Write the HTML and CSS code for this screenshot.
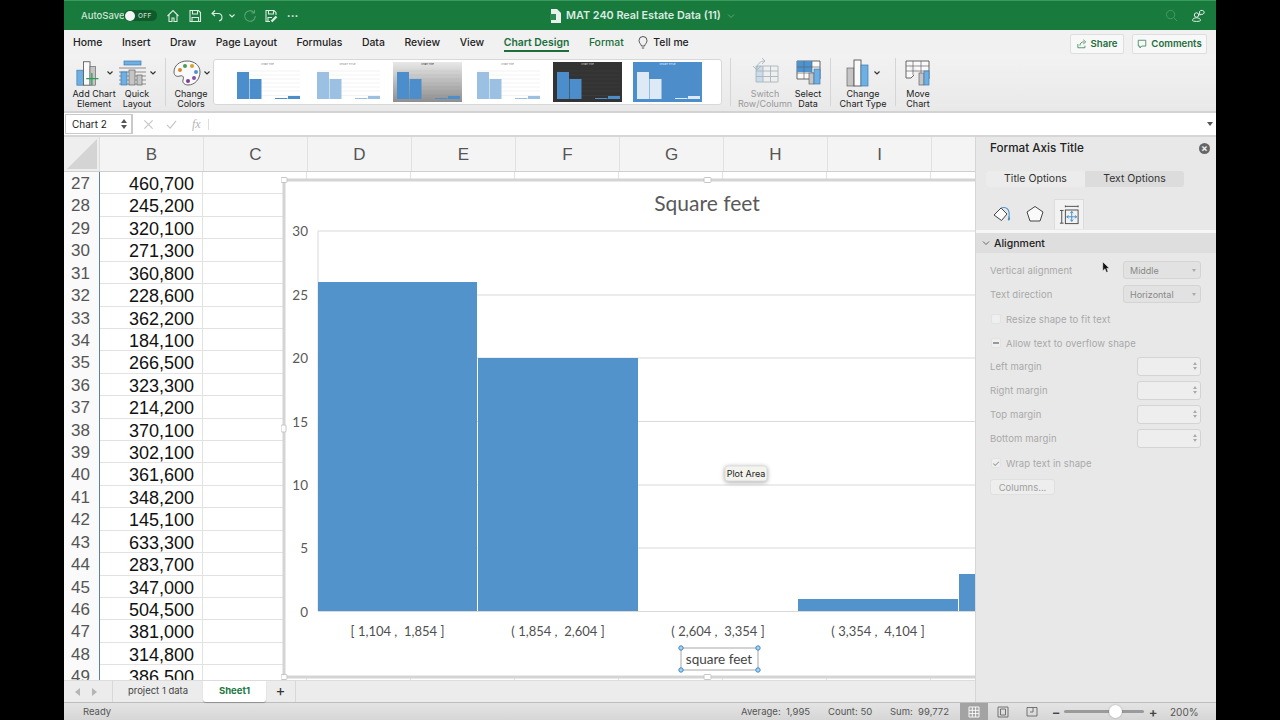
FILE: index.html
```html
<!DOCTYPE html>
<html lang="en">
<head>
<meta charset="utf-8">
<title>MAT 240 Real Estate Data (11)</title>
<link rel="stylesheet" href="styles.css">
</head>
<body>
<svg class="defs" width="0" height="0">
  <defs>
    <symbol id="thumb" viewBox="0 0 69 34" preserveAspectRatio="none">
      <path class="tgrid" d="M4 3H67M4 7H67M4 11H67M4 15H67M4 19H67M4 23H67M4 27.500H67"/>
      <rect x="4" y="4" width="12" height="27" fill="currentColor"/>
      <rect x="16.500" y="11" width="12" height="20" fill="currentColor"/>
      <rect x="42" y="30" width="12.500" height="1" fill="currentColor"/>
      <rect x="55" y="28" width="12" height="3" fill="currentColor"/>
    </symbol>
  </defs>
</svg>
<div class="app">
  <header class="titlebar">
    <div class="qat">
      <span class="autosave">AutoSave</span>
      <span class="toggle"><i class="knob"></i><b>OFF</b></span>
      <svg class="qi home" viewBox="0 0 14 14"><path d="M1.500 7 7 1.500 12.500 7M3 6v6.500h3V9h2v3.500h3V6"/></svg>
      <svg class="qi save" viewBox="0 0 14 14"><path d="M2 1.500h8.500L12.500 3.500V12.500H2ZM4.500 1.500V5H9.500V1.500M4 12.500V8.500H10.500V12.500"/></svg>
      <svg class="qi undo" viewBox="0 0 14 14"><path d="M5 1.500 2 4.500 5 7M2 4.500h6a3.800 3.800 0 0 1 1 7.500"/></svg>
      <svg class="qc" viewBox="0 0 8 8"><path d="M1.500 2.500 4 5l2.500-2.500"/></svg>
      <svg class="qi redo" viewBox="0 0 14 14"><path d="M11 3.500A5.300 5.300 0 1 0 12.300 7M11.500 1v3h-3"/></svg>
      <svg class="qi saveas" viewBox="0 0 14 14"><path d="M6 12.500H2V1.500h8L12 3.500V6M4.500 1.500V5h5V1.500M4 12V8.500h4"/><path class="thick" d="m7.500 12.500 5-5"/></svg>
      <span class="dots">&#8226;&#8226;&#8226;</span>
    </div>
    <div class="doc">
      <svg class="docicon" viewBox="0 0 11 14"><path d="M1 0h6l4 4v10H1Z"/><rect x="0" y="5" width="6" height="6" fill="#2b8a50"/></svg>
      <span>MAT 240 Real Estate Data (11)</span>
      <svg class="docchev" viewBox="0 0 8 8"><path d="M1 2.500 4 5.500 7 2.500"/></svg>
    </div>
    <div class="tright">
      <svg class="search" viewBox="0 0 14 14"><circle cx="6" cy="6" r="4.500"/><path d="m9.500 9.500 3.500 3.500"/></svg>
      <svg class="people" viewBox="0 0 16 14"><circle cx="5.500" cy="6" r="2.200"/><path d="M1.500 11.500c0-2 2-2.700 4-2.700s4 .7 4 2.700c0 1.200-8 1.200-8 0ZM8.500 2.500a2.500 2 0 1 1 1.500 2.800L8.800 6.200Z"/></svg>
    </div>
  </header>

  <nav class="tabs">
    <a>Home</a><a>Insert</a><a>Draw</a><a>Page Layout</a><a>Formulas</a><a>Data</a><a>Review</a><a>View</a>
    <a class="green active">Chart Design</a><a class="green">Format</a>
    <a class="tell"><svg viewBox="0 0 10 14"><path d="M3.500 10C3 8 1 7 1 4.500a4 4 0 0 1 8 0C9 7 7 8 6.500 10ZM3.800 12h2.400"/></svg>Tell me</a>
    <div class="actions">
      <button class="action a-share"><svg viewBox="0 0 12 12"><path d="M1 6v4.500h8.500V8M3.500 8c0-3 2-4.500 5-4.500M7.500 1 10.500 3.500 7.500 6"/></svg>Share</button>
      <button class="action a-comments"><svg viewBox="0 0 12 12"><path d="M1.500 1.500h9v7H5.500L3.500 10.800V8.500h-2Z"/></svg>Comments</button>
    </div>
  </nav>

  <section class="ribbon">
    <div class="rb w-add">
      <div class="ricon">
        <svg class="big" viewBox="0 0 32 30"><rect x="2" y="12" width="7" height="16" class="blue"/><rect x="9" y="3" width="7" height="25" class="ln"/><rect x="16" y="8" width="6" height="20" class="gray"/><path d="M18 15v13M12 21h13" class="plus"/></svg>
        <svg class="chev" viewBox="0 0 8 8"><path d="M1.500 2.500 4 5l2.500-2.500"/></svg>
      </div>
      <span>Add Chart<br>Element</span>
    </div>
    <div class="rb w-quick">
      <div class="ricon">
        <svg class="big" viewBox="0 0 30 30"><rect x="6" y="3" width="17" height="4" class="blue"/><path class="hl" d="M1 10h27M1 14h27M1 18h27M1 22h27M1 26h27"/><rect x="3" y="14" width="6" height="13" class="blue" /><rect x="11" y="12" width="6" height="15" class="gray"/><rect x="19" y="17" width="5" height="10" class="gray"/></svg>
        <svg class="chev" viewBox="0 0 8 8"><path d="M1.500 2.500 4 5l2.500-2.500"/></svg>
      </div>
      <span>Quick<br>Layout</span>
    </div>
    <i class="sep s1"></i>
    <div class="rb w-colors">
      <div class="ricon">
        <svg class="big" viewBox="0 0 30 30"><path class="ln" d="M15 3C7 3 2 8 2 14c0 4 3 5 6 4 3-1 4 1 3 4-1 3 2 5 5 5 7 0 12-6 12-13C28 7 22 3 15 3Z"/><circle cx="8" cy="12" r="2" fill="#d9882c"/><circle cx="13" cy="8" r="2" fill="#4a9c54"/><circle cx="20" cy="8" r="2" fill="#d9a02c"/><circle cx="24" cy="14" r="2" fill="#4f93cf"/><circle cx="22" cy="20" r="2" fill="#8154a6"/><circle cx="16" cy="23" r="2" fill="#7b3d96"/></svg>
        <svg class="chev" viewBox="0 0 8 8"><path d="M1.500 2.500 4 5l2.500-2.500"/></svg>
      </div>
      <span>Change<br>Colors</span>
    </div>
    <div class="gallery">
      <div class="th th1"><em>Chart Title</em><svg><use href="#thumb"/></svg></div>
      <div class="th th2"><em>CHART TITLE</em><svg><use href="#thumb"/></svg></div>
      <div class="th th3"><em>Chart Title</em><svg><use href="#thumb"/></svg></div>
      <div class="th th4"><em>Chart Title</em><svg><use href="#thumb"/></svg></div>
      <div class="th th5"><em>Chart Title</em><svg><use href="#thumb"/></svg></div>
      <div class="th th6"><em>CHART TITLE</em><svg><use href="#thumb"/></svg></div>
    </div>
    <i class="sep s2"></i>
    <div class="rb w-switch dim">
      <div class="ricon">
        <svg class="big" viewBox="0 0 28 30"><rect x="5" y="8" width="7" height="16" fill="#c8dcec"/><path class="faint" d="M5 8h22v16H5ZM5 13h22M5 18.500h22M12 8v16M19.500 8v16"/><path class="faint" d="M2 8 6 12 10 8M6 11c0-5 3-8 8-8M11 0l3 3-3 3"/></svg>
      </div>
      <span>Switch<br>Row/Column</span>
    </div>
    <div class="rb w-select">
      <div class="ricon">
        <svg class="big" viewBox="0 0 28 30"><path class="ln" d="M3 3h23v18H3Z"/><rect x="3" y="3" width="15" height="11" fill="#4a94d3"/><path class="hl" d="M3 9h23M3 15h23M10 3v18M18 3v18"/><rect x="15" y="15" width="5" height="11" class="gray"/><rect x="20" y="11" width="6" height="15" class="blue"/></svg>
      </div>
      <span>Select<br>Data</span>
    </div>
    <i class="sep s3"></i>
    <div class="rb w-type">
      <div class="ricon">
        <svg class="big" viewBox="0 0 26 30"><rect x="1" y="10" width="7" height="18" class="gray"/><rect x="8" y="2" width="7" height="26" class="ln"/><rect x="15" y="7" width="7" height="21" class="blue"/></svg>
        <svg class="chev" viewBox="0 0 8 8"><path d="M1.500 2.500 4 5l2.500-2.500"/></svg>
      </div>
      <span>Change<br>Chart Type</span>
    </div>
    <i class="sep s4"></i>
    <div class="rb w-move">
      <div class="ricon">
        <svg class="big" viewBox="0 0 26 30"><path class="ln" d="M1 3h23v18M1 3v17h5l3-3"/><path class="hl" d="M1 8h23M1 13h23M8 3v14M16 3v14"/><rect x="14" y="15" width="5" height="12" class="gray"/><rect x="19" y="13" width="5" height="14" class="blue"/></svg>
      </div>
      <span>Move<br>Chart</span>
    </div>
  </section>

  <section class="formula">
    <div class="namebox"><span>Chart 2</span><b class="stepper"><i class="up"></i><i class="down"></i></b></div>
    <svg class="fx-i fx-x" viewBox="0 0 12 12"><path d="m1.500 1.500 9 9M10.500 1.500l-9 9"/></svg>
    <svg class="fx-i" viewBox="0 0 12 12"><path d="m1 6.500 3.500 3.500L11 2"/></svg>
    <span class="fx">fx</span>
    <i class="fx-sep"></i>
    <i class="fx-drop"></i>
  </section>

  <main class="main">
    <div class="sheet">
      <div class="colhead">
        <div class="corner"><i></i></div>
        <div class="col">B</div><div class="col">C</div><div class="col">D</div><div class="col">E</div><div class="col">F</div><div class="col">G</div><div class="col">H</div><div class="col">I</div><div class="col"></div>
      </div>
      <div class="grid">
        <div class="row"><b>27</b><span>460,700</span><u></u></div>
        <div class="row"><b>28</b><span>245,200</span><u></u></div>
        <div class="row"><b>29</b><span>320,100</span><u></u></div>
        <div class="row"><b>30</b><span>271,300</span><u></u></div>
        <div class="row"><b>31</b><span>360,800</span><u></u></div>
        <div class="row"><b>32</b><span>228,600</span><u></u></div>
        <div class="row"><b>33</b><span>362,200</span><u></u></div>
        <div class="row"><b>34</b><span>184,100</span><u></u></div>
        <div class="row"><b>35</b><span>266,500</span><u></u></div>
        <div class="row"><b>36</b><span>323,300</span><u></u></div>
        <div class="row"><b>37</b><span>214,200</span><u></u></div>
        <div class="row"><b>38</b><span>370,100</span><u></u></div>
        <div class="row"><b>39</b><span>302,100</span><u></u></div>
        <div class="row"><b>40</b><span>361,600</span><u></u></div>
        <div class="row"><b>41</b><span>348,200</span><u></u></div>
        <div class="row"><b>42</b><span>145,100</span><u></u></div>
        <div class="row"><b>43</b><span>633,300</span><u></u></div>
        <div class="row"><b>44</b><span>283,700</span><u></u></div>
        <div class="row"><b>45</b><span>347,000</span><u></u></div>
        <div class="row"><b>46</b><span>504,500</span><u></u></div>
        <div class="row"><b>47</b><span>381,000</span><u></u></div>
        <div class="row"><b>48</b><span>314,800</span><u></u></div>
        <div class="row"><b>49</b><span>386,500</span><u></u></div>
        <svg class="chart" viewBox="281 175 695 508">
          <rect class="c-frame" x="284" y="180" width="720" height="497"/>
          <text class="c-title" x="707" y="211">Square feet</text>
          <path class="c-grid" d="M318 231H976M318 295H976M318 358H976M318 421.500H976M318 485H976M318 548H976M318 231V611M318 611.500H976"/>
          <rect class="c-bar" x="318" y="282" width="159" height="329"/>
          <rect class="c-bar" x="478" y="358" width="160" height="253"/>
          <rect class="c-bar" x="798" y="599" width="160" height="12"/>
          <rect class="c-bar" x="959" y="574" width="17" height="37"/>
          <text class="c-y" x="308" y="236">30</text>
          <text class="c-y" x="308" y="300">25</text>
          <text class="c-y" x="308" y="363">20</text>
          <text class="c-y" x="308" y="427">15</text>
          <text class="c-y" x="308" y="490">10</text>
          <text class="c-y" x="308" y="553">5</text>
          <text class="c-y" x="308" y="617">0</text>
          <text class="c-x" x="397.500" y="636">[ 1,104 ,  1,854 ]</text>
          <text class="c-x" x="558" y="636">( 1,854 ,  2,604 ]</text>
          <text class="c-x" x="718" y="636">( 2,604 ,  3,354 ]</text>
          <text class="c-x" x="878" y="636">( 3,354 ,  4,104 ]</text>
          <rect class="c-sel" x="681" y="648" width="77" height="22"/>
          <text class="c-at" x="719" y="664">square feet</text>
          <circle class="c-h" cx="681" cy="648" r="2.200"/><circle class="c-h" cx="758" cy="648" r="2.200"/>
          <circle class="c-h" cx="681" cy="670" r="2.200"/><circle class="c-h" cx="758" cy="670" r="2.200"/>
          <rect class="c-ch" x="281" y="177.500" width="6" height="5" rx="1"/>
          <rect class="c-ch" x="704" y="177.500" width="7" height="5" rx="1"/>
          <rect class="c-ch" x="281" y="425" width="5" height="7" rx="1"/>
          <rect class="c-ch" x="281" y="674.500" width="6" height="5" rx="1"/>
          <rect class="c-ch" x="704" y="674.500" width="7" height="5" rx="1"/>
          <rect class="c-tipbox" x="725" y="466" width="42" height="15" rx="3"/>
          <text class="c-tip" x="746" y="477">Plot Area</text>
        </svg>
      </div>
      <div class="sheettabs">
        <div class="nav"><i class="tl"></i><i class="tr"></i></div>
        <span class="st">project 1 data</span>
        <span class="st on">Sheet1</span>
        <span class="add">+</span>
      </div>
    </div>

    <aside class="panel">
      <div class="phead"><strong>Format Axis Title</strong><span class="close">&#215;</span></div>
      <div class="seg"><span class="lit">Title Options</span><span>Text Options</span></div>
      <div class="ptabs">
        <span class="pt"><svg viewBox="0 0 20 20"><path class="pw" d="M2 11 9 4l6 6-5.500 6.500Z"/><path class="pb" d="M9 4c6-2 9 2 8 9"/><path class="pbf" d="M17 12c1.500 2 1.500 4 0 4.500s-1.500-2.500 0-4.500Z"/></svg></span>
        <span class="pt"><svg viewBox="0 0 20 20"><path class="pw" d="M10 2.500 18 8l-3 9H5L2 8Z"/></svg></span>
        <span class="pt on"><svg viewBox="0 0 22 22"><path class="pi" d="M1 6h4M1 20h4M3 6v14M7 1.500h14M7 .5v2M21 .5v2"/><rect x="7" y="5.500" width="14" height="15" class="pi"/><path class="pb" d="M14 7v11M8.500 13h11M12.500 9l1.500-2 1.500 2M12.500 16l1.500 2 1.500-2M10.500 11.500l-2 1.500 2 1.500M17.500 11.500l2 1.500-2 1.500"/></svg></span>
      </div>
      <div class="sect"><svg viewBox="0 0 8 8"><path d="M1 2.500 4 5.500 7 2.500"/></svg>Alignment</div>
      <div class="pbody">
        <div class="prow sel"><label>Vertical alignment</label><div class="dd"><span>Middle</span><i></i></div></div>
        <div class="prow sel"><label>Text direction</label><div class="dd"><span>Horizontal</span><i></i></div></div>
        <div class="prow chk nudge"><i class="box"></i><label>Resize shape to fit text</label></div>
        <div class="prow chk"><i class="box dash"></i><label>Allow text to overflow shape</label></div>
        <div class="prow unnudge"><label>Left margin</label><div class="spin"><b class="stepper"><i class="up"></i><i class="down"></i></b></div></div>
        <div class="prow"><label>Right margin</label><div class="spin"><b class="stepper"><i class="up"></i><i class="down"></i></b></div></div>
        <div class="prow"><label>Top margin</label><div class="spin"><b class="stepper"><i class="up"></i><i class="down"></i></b></div></div>
        <div class="prow"><label>Bottom margin</label><div class="spin"><b class="stepper"><i class="up"></i><i class="down"></i></b></div></div>
        <div class="prow chk wrap"><i class="box check">&#10003;</i><label>Wrap text in shape</label></div>
        <button class="cols">Columns...</button>
      </div>
      <svg class="cursor" viewBox="0 0 10 14"><path d="M1 0v11l2.800-2.500L5.500 13l2-.8L5.800 8H9Z"/></svg>
    </aside>
  </main>

  <footer class="status">
    <span class="ready">Ready</span>
    <span class="stat s-a">Average:&nbsp; 1,995</span>
    <span class="stat s-c">Count: 50</span>
    <span class="stat s-s">Sum:&nbsp; 99,772</span>
    <span class="vb on"><svg viewBox="0 0 12 12"><path d="M1 1h10v10H1ZM1 4.300h10M1 7.600h10M4.300 1v10M7.600 1v10"/></svg></span>
    <span class="vb"><svg viewBox="0 0 12 12"><path d="M1 1h10v10H1ZM3.500 3h5v6h-5Z"/></svg></span>
    <span class="vb"><svg viewBox="0 0 12 12"><path d="M1 1.500h10V10H1ZM7 1.500V6H4"/></svg></span>
    <span class="zm zm-a">&#8722;</span>
    <div class="slider"><i class="thumb"></i></div>
    <span class="zm zm-b">+</span>
    <span class="pct">200%</span>
  </footer>
</div>
</body>
</html>
```
FILE: styles.css
```css
* { box-sizing: border-box; }
html, body { margin: 0; height: 100%; background: #000; overflow: hidden; }
body { font-family: Inter, "Liberation Sans", sans-serif; color: #222; }
.defs { position: absolute; }
.app { width: 1152px; height: 720px; margin: 0 auto; display: flex; flex-direction: column; background: #f1f1f1; }

/* title bar */
.titlebar { height: 30px; flex: none; background: #187a3c; border-top: 1px solid #3a9a5c; display: grid; grid-template-columns: 1fr auto 1fr; align-items: center; color: #e6f0ea; }
.qat { display: flex; align-items: center; padding-left: 17px; height: 100%; }
.autosave { font-size: 9.500px; font-weight: 500; color: #cfe4d6; width: 43px; }
.toggle { width: 33px; height: 11px; background: #0e5a2a; border-radius: 6px; display: flex; align-items: center; position: relative; padding-left: 1px; }
.knob { width: 10px; height: 10px; border-radius: 50%; background: #f4f4f4; }
.toggle b { font-size: 6.500px; font-weight: 500; margin-left: 3px; color: #c9ddcf; letter-spacing: .3px; }
.qi { width: 14px; height: 14px; flex: none; fill: none; stroke: #dcebe1; stroke-width: 1.100; }
.home { margin-left: 9px; }
.save { margin-left: 8px; }
.undo { margin-left: 8px; }
.qc { width: 8px; height: 8px; margin-left: 4px; fill: none; stroke: #dcebe1; stroke-width: 1.200; }
.redo { margin-left: 7px; opacity: .35; }
.saveas { margin-left: 7px; }
.thick { stroke-width: 2.400; }
.dots { font-size: 6px; margin-left: 9px; letter-spacing: .5px; color: #e6f0ea; }
.doc { display: flex; align-items: center; padding-left: 5px; font-size: 10.800px; font-weight: 600; color: #dcebe1; white-space: nowrap; }
.docicon { width: 11px; height: 14px; margin-right: 5px; fill: #e8f1eb; }
.docchev { width: 8px; height: 8px; margin-left: 6px; fill: none; stroke: #5da678; stroke-width: 1; }
.tright { display: flex; justify-content: flex-end; align-items: center; padding-right: 9px; gap: 13px; }
.search { width: 13px; height: 13px; fill: none; stroke: #4b9a68; stroke-width: 1; }
.people { width: 16px; height: 14px; fill: none; stroke: #e0eee5; stroke-width: 1; }

/* tabs */
.tabs { height: 25px; flex: none; display: flex; align-items: center; padding-left: 9px; gap: 19.600px; font-size: 10.400px; font-weight: 500; background: #f1f1f1; color: #222; position: relative; }
.tabs a { white-space: nowrap; line-height: 25px; height: 25px; position: relative; }
.green { color: #1c6e3b; }
.tabs .active { font-weight: 600; }
.tabs .active::after { content: ""; position: absolute; left: 0; right: 0; bottom: 3px; height: 2px; background: #1c6e3b; }
.tell { display: flex; align-items: center; gap: 5px; margin-left: -5px; }
.tell svg { width: 10px; height: 14px; fill: none; stroke: #444; stroke-width: .9; }
.actions { margin-left: auto; padding-right: 9px; display: flex; gap: 8px; margin-top: 2px; }
.action { height: 20px; padding: 0; border: 1px solid #dedede; border-radius: 2px; background: #f8f8f8; color: #1c6e3b; font: 600 9.600px Inter, sans-serif; display: flex; align-items: center; justify-content: center; gap: 4px; }
.a-share { width: 54px; }
.a-comments { width: 75px; }
.action svg { width: 10px; height: 10px; fill: none; stroke: #2a7a48; stroke-width: .9; }

/* ribbon */
.ribbon { height: 58px; flex: none; display: flex; align-items: flex-start; background: linear-gradient(#f2f2f2, #e9e9e9); border-bottom: 2px solid #d2d2d2; font-size: 9px; position: relative; }
.rb { display: flex; flex-direction: column; align-items: center; flex: none; padding-top: 3px; }
.rb span { text-align: center; line-height: 9.500px; font-size: 9px; white-space: nowrap; margin-top: 1px; }
.ricon { height: 30px; display: flex; align-items: center; justify-content: center; }
.big { width: 30px; height: 30px; flex: none; }
.big .blue { fill: #6fb0e3; stroke: #3c78ad; stroke-width: .7; }
.big .gray { fill: #c5c5c5; stroke: #666; stroke-width: .7; }
.big .ln { fill: #fafafa; stroke: #555; stroke-width: .9; }
.big .hl { fill: none; stroke: #666; stroke-width: .7; }
.big .plus { fill: none; stroke: #2a9a55; stroke-width: 1.300; }
.big .faint { fill: none; stroke: #a9b4bb; stroke-width: .9; }
.chev { width: 8px; height: 8px; margin-left: 1px; fill: none; stroke: #333; stroke-width: 1.200; }
.w-add { width: 46px; margin-left: 7px; }
.w-quick { width: 40px; }
.sep { flex: none; width: 1px; height: 48px; margin-top: 3px; background: #d5d5d5; }
.s1 { margin-left: 8px; }
.w-colors { width: 44px; margin-left: 3px; }
.gallery { flex: none; width: 509px; height: 46px; margin-top: 4px; margin-right: 8px; background: #fff; border: 1px solid #d8d8d8; border-radius: 3px; display: flex; padding: 2px 0 0 19px; gap: 11px; align-items: flex-start; }
.th { width: 69px; height: 40px; display: flex; flex-direction: column; color: #4c8ecb; background: #fff; flex: none; overflow: hidden; }
.th em { font-style: normal; font-size: 2.500px; text-align: center; line-height: 6px; height: 6px; color: #777; }
.th svg { width: 69px; height: 34px; display: block; }
.tgrid { fill: none; stroke: #888; stroke-width: .4; opacity: .25; }
.th2, .th4 { color: #9cc0e2; }
.th3 { background: linear-gradient(#e8e8e8, #8e8e8e); }
.th3 em { color: #222; }
.th5 { background: #333; color: #4c8ecb; }
.th5 em { color: #ddd; }
.th6 { background: #4c8ecb; color: #dde9f4; }
.th6 em { color: #fff; }
.w-switch { width: 52px; margin-left: 8px; }
.dim span { color: #999; }
.w-select { width: 34px; }
.s3 { margin-left: 5px; }
.w-type { width: 52px; margin-left: 6px; }
.w-type .big, .w-move .big { width: 26px; }
.s4 { margin-left: 6px; }
.w-move { width: 34px; margin-left: 5px; }

/* formula */
.formula { height: 24px; flex: none; background: #fff; border-bottom: 2px solid #d6d6d6; display: flex; align-items: center; padding-left: 1px; position: relative; }
.namebox { width: 68px; height: 20px; border: 1px solid #c9c9c9; border-width: 1px 2px 1px 1px; display: flex; align-items: center; padding: 0 4px 0 6px; font-size: 10px; background: #fff; justify-content: space-between; }
.stepper { display: flex; flex-direction: column; gap: 2px; }
.up, .down { display: block; width: 0; height: 0; border: 3px solid transparent; border-width: 0 3px 4px; border-bottom-color: #555; }
.down { border-width: 4px 3px 0; border-top-color: #555; border-bottom-color: transparent; }
.fx-i { width: 11px; height: 11px; margin-left: 12px; fill: none; stroke: #c4c4c4; stroke-width: 1.200; }
.fx-x { margin-left: 10px; }
.fx { font: italic 12px "Liberation Serif", serif; color: #b4b4b4; margin-left: 15px; }
.fx-sep { width: 1px; height: 11px; background: #ddd; margin-left: 7px; }
.fx-drop { margin-left: auto; margin-right: 3px; width: 0; height: 0; border: 3px solid transparent; border-top: 4px solid #555; border-bottom: 0; }

/* main */
.main { flex: 1; display: flex; min-height: 0; }
.sheet { width: 912px; flex: none; display: flex; flex-direction: column; min-height: 0; border-right: 1px solid #d6d6d6; }
.colhead { height: 35px; flex: none; display: flex; background: #f4f4f4; border-bottom: 1px solid #cfcfcf; }
.corner { width: 36px; flex: none; border-right: 1px solid #ddd; background: #eee; display: flex; align-items: flex-end; justify-content: flex-end; padding: 0 2px 2px 0; }
.corner i { display: block; width: 0; height: 0; border-style: solid; border-width: 0 0 30px 30px; border-color: transparent transparent #d4d4d4 transparent; }
.col { width: 104px; flex: none; text-align: center; font: 17px/36px "Liberation Sans", sans-serif; color: #555; border-right: 1px solid #e2e2e2; }
.grid { flex: 1; overflow: hidden; position: relative; background: #fff; }
.row { height: 22.430px; display: flex; align-items: center; font-family: "Liberation Sans", sans-serif; }
.row b { width: 36px; flex: none; height: 100%; font-weight: 400; font-size: 17px; line-height: 24px; color: #555; padding-left: 7px; background: #fafafa; border-right: 1px solid #5f7fa6; }
.row span { width: 103px; flex: none; height: 100%; text-align: right; font-size: 18px; line-height: 24px; color: #111; padding-right: 8px; border-right: 1px solid #e2e2e2; border-bottom: 1px solid #e2e2e2; }
.row u { flex: 1; height: 100%; border-bottom: 1px solid #e2e2e2; background: repeating-linear-gradient(90deg, transparent 0 103px, #e2e2e2 103px 104px); }
.chart { position: absolute; left: 217px; top: 3px; width: 695px; height: 508px; overflow: hidden; }
.c-frame { fill: #fff; stroke: #d4d4d4; stroke-width: 3; }
.c-title { font: 21px Lato, "Open Sans", sans-serif; fill: #595959; text-anchor: middle; }
.c-grid { fill: none; stroke: #d9d9d9; stroke-width: 1; }
.c-bar { fill: #5293cc; }
.c-y { font: 13.500px Lato, sans-serif; fill: #595959; text-anchor: end; }
.c-x { font: 13px Lato, sans-serif; fill: #4f4f4f; text-anchor: middle; white-space: pre; }
.c-sel { fill: #fff; stroke: #a8a8a8; stroke-width: 1; }
.c-at { font: 13.500px Lato, sans-serif; fill: #444; text-anchor: middle; }
.c-h { fill: #a9d0ee; stroke: #3f8ac7; stroke-width: 1; }
.c-ch { fill: #fff; stroke: #c6c6c6; stroke-width: 1; }
.c-tipbox { fill: #f4f4ee; stroke: #ddd; stroke-width: 1; filter: drop-shadow(0 1px 2px rgba(0,0,0,.35)); }
.c-tip { font: 9px Inter, sans-serif; fill: #222; text-anchor: middle; }

/* sheet tabs */
.sheettabs { height: 22px; flex: none; display: flex; align-items: stretch; background: #ececec; border-top: 1px solid #dcdcdc; font-size: 9.500px; position: relative; }
.nav { width: 49px; display: flex; align-items: center; gap: 12px; padding-left: 11px; border-right: 1px solid #d8d8d8; flex: none; }
.tl, .tr { width: 0; height: 0; border: 4px solid transparent; border-left-width: 0; border-right: 5px solid #b5b5b5; }
.tr { border-right: 0; border-left: 5px solid #b5b5b5; }
.st { width: 90px; flex: none; text-align: center; line-height: 20px; color: #444; }
.st.on { width: 63px; background: #fff; color: #1c7a42; font-weight: 700; border-radius: 0 0 3px 3px; box-shadow: 0 1px 1px rgba(0,0,0,.25); height: 21px; }
.add { width: 30px; flex: none; text-align: center; font-size: 15px; line-height: 19px; color: #333; border-right: 1px solid #d8d8d8; }

/* panel */
.panel { flex: 1; background: #e8e8e8; position: relative; display: flex; flex-direction: column; font-size: 9.500px; min-width: 0; }
.phead { height: 22px; flex: none; display: flex; align-items: center; justify-content: space-between; padding: 0 6px 0 14px; }
.phead strong { font-size: 11.700px; font-weight: 500; color: #222; }
.close { width: 11px; height: 11px; border-radius: 50%; background: #666; color: #eee; font-size: 10px; line-height: 11px; text-align: center; font-weight: 700; }
.seg { margin: 12px 32px 0 10px; height: 16px; display: flex; flex: none; background: #dcdcdc; border-radius: 3px; font-size: 10.500px; }
.seg span { flex: 1; text-align: center; line-height: 16px; color: #333; }
.seg .lit { background: #ececec; border-radius: 3px 0 0 3px; }
.ptabs { height: 30px; margin-top: 12px; display: flex; padding-left: 13px; gap: 7px; flex: none; }
.pt { width: 26px; height: 30px; display: flex; align-items: center; justify-content: center; }
.pt.on { background: #f2f2f2; border: 1px solid #dcdcdc; border-bottom: 0; width: 30px; margin-left: -1px; }
.pt svg { width: 20px; height: 20px; }
.pi { fill: none; stroke: #444; stroke-width: 1; }
.pw { fill: #fafafa; stroke: #444; stroke-width: 1; }
.pb { fill: none; stroke: #4a90cc; stroke-width: 1.100; }
.pbf { fill: #4a90cc; }
.sect { height: 20px; margin-top: 4px; background: #dedede; display: flex; align-items: center; font-size: 10.500px; font-weight: 500; color: #222; padding-left: 6px; gap: 4px; flex: none; box-shadow: 0 -3px 0 #f6f6f6; }
.sect svg { width: 8px; height: 8px; fill: none; stroke: #666; stroke-width: 1; }
.pbody { padding: 5px 15px 0 14px; display: flex; flex-direction: column; }
.prow { height: 24px; display: flex; align-items: center; justify-content: space-between; color: #a8a8a8; flex: none; }
.nudge { margin-top: 1px; }
.unnudge { margin-top: -1px; }
.prow label { letter-spacing: .1px; }
.dd { width: 78px; height: 18px; background: #e2e2e2; border: 1px solid #d4d4d4; border-radius: 3px; font-size: 9px; color: #888; display: flex; align-items: center; justify-content: space-between; padding: 0 4px 0 6px; }
.dd i { width: 0; height: 0; border: 2px solid transparent; border-top: 3px solid #aaa; border-bottom: 0; }
.chk { justify-content: flex-start; gap: 5px; padding-left: 1px; }
.box { width: 10px; height: 10px; background: #efefef; border-radius: 2px; border: 1px solid #e2e2e2; display: flex; align-items: center; justify-content: center; font-style: normal; font-size: 9px; color: #888; }
.dash::after { content: ""; width: 6px; height: 1.500px; background: #999; }
.wrap { margin-top: 1px; }
.spin { width: 64px; height: 19px; background: #eeeeee; border: 1px solid #d4d4d4; border-radius: 3px; display: flex; justify-content: flex-end; align-items: center; padding-right: 3px; }
.spin .up, .spin .down { border-width: 0 2px 3px; border-bottom-color: #aaa; }
.spin .down { border-width: 3px 2px 0; border-top-color: #aaa; border-bottom-color: transparent; }
.cols { width: 65px; height: 16px; margin-top: 4px; padding: 0; background: #eeeeee; border: 1px solid #e0e0e0; border-radius: 3px; font: 9.500px Inter, sans-serif; color: #a0a0a0; }
.cursor { position: absolute; left: 126px; top: 124px; width: 8px; height: 13px; fill: #111; stroke: #fff; stroke-width: .5; }

/* status */
.status { height: 18px; flex: none; display: flex; align-items: center; background: linear-gradient(#e4e4e4, #d6d6d6); border-top: 1px solid #bdbdbd; font-size: 9.500px; color: #555; }
.ready { margin-left: 19px; width: 658px; flex: none; }
.stat { flex: none; white-space: nowrap; }
.s-a { width: 87px; }
.s-c { width: 62px; }
.s-s { width: 70px; }
.vb { width: 28px; height: 100%; display: flex; align-items: center; justify-content: center; flex: none; }
.vb.on { background: #a3a3a3; }
.vb + .vb { margin-left: 1px; }
.vb svg { width: 12px; height: 12px; fill: none; stroke: #666; stroke-width: .9; }
.vb.on svg { stroke: #fff; }
.zm { width: 12px; text-align: center; font-size: 13px; font-weight: 600; color: #444; flex: none; }
.zm-a { margin-left: 4px; }
.zm-b { margin-left: 3px; }
.slider { width: 80px; height: 3px; background: #9a9a9a; border-radius: 2px; position: relative; margin-left: 2px; flex: none; }
.thumb { position: absolute; left: 45px; top: -5px; width: 13px; height: 13px; border-radius: 50%; background: #fff; box-shadow: 0 0 2px rgba(0,0,0,.3); }
.pct { margin-left: 11px; font-size: 10px; flex: none; }
```
